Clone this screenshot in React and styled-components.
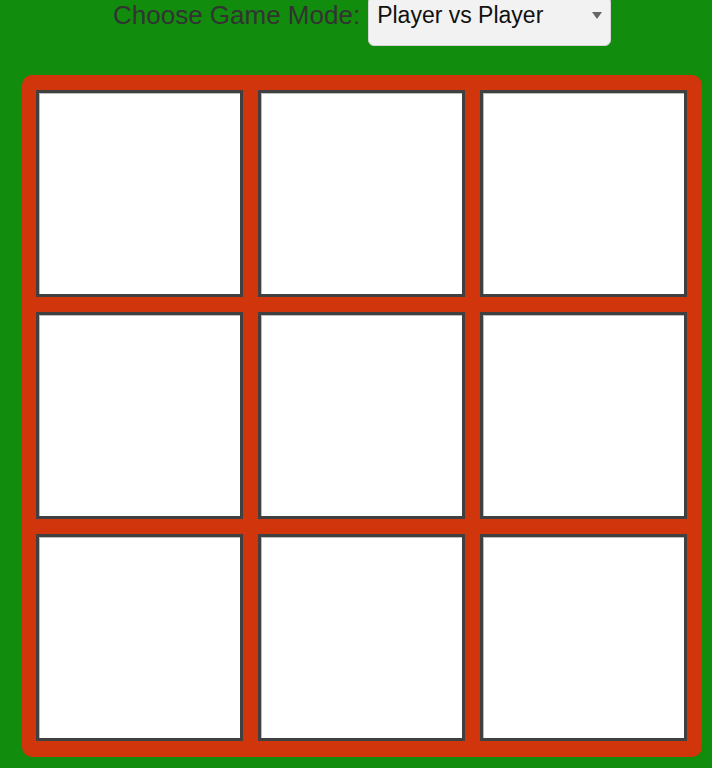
import React, { useState } from "react";
import styled, { createGlobalStyle } from "styled-components";

const GlobalStyle = createGlobalStyle`
  html, body {
    margin: 0;
    padding: 0;
    background: #118c0c;
    overflow: hidden;
  }
  body {
    font-family: "Liberation Sans", Arial, sans-serif;
  }
`;

const Page = styled.div`
  width: 712px;
  height: 768px;
  background: #118c0c;
  display: flex;
  flex-direction: column;
`;

const ModeBar = styled.div`
  display: flex;
  align-items: center;
  gap: 8px;
  margin-top: -4px;
  padding-left: 113px;
  height: 50px;
`;

const ModeLabel = styled.label`
  font-size: 26px;
  color: #333333;
  line-height: 1;
  margin-top: -12px;
`;

const SelectWrap = styled.div`
  position: relative;
  width: 243px;
  height: 50px;
`;

const ModeSelect = styled.select`
  appearance: none;
  width: 100%;
  height: 100%;
  box-sizing: border-box;
  padding: 0 30px 12px 8px;
  font-family: "Liberation Sans", Arial, sans-serif;
  font-size: 23px;
  color: #111;
  background: #f2f2f2;
  border: 1px solid #d4d4d4;
  border-radius: 6px;
  outline: none;
`;

const Caret = styled.span`
  position: absolute;
  right: 9px;
  top: 16px;
  width: 0;
  height: 0;
  border-left: 5px solid transparent;
  border-right: 5px solid transparent;
  border-top: 7px solid #666;
  pointer-events: none;
`;

const Board = styled.div`
  margin: 29px 0 0 22px;
  width: 680px;
  box-sizing: border-box;
  padding: 15px 15px 16px 14px;
  display: grid;
  grid-template-columns: repeat(3, 207px);
  grid-template-rows: repeat(3, 207px);
  gap: 15px;
  background: #d0350c;
  border-radius: 10px;
`;

const Cell = styled.button`
  box-sizing: border-box;
  background: #ffffff;
  border: 3px solid #404040;
  box-shadow: inset 1px 1px 0 #bdbdbd;
  padding: 0;
  margin: 0;
  font-family: "Liberation Sans", Arial, sans-serif;
  font-size: 96px;
  color: #333;
  cursor: pointer;
`;

export default function App() {
  const [mode, setMode] = useState("pvp");
  const [cells, setCells] = useState(Array(9).fill(""));
  const [turn, setTurn] = useState("X");

  const play = (i) => {
    if (cells[i]) return;
    const next = cells.slice();
    next[i] = turn;
    setCells(next);
    setTurn(turn === "X" ? "O" : "X");
  };

  return (
    <Page>
      <GlobalStyle />
      <ModeBar>
        <ModeLabel htmlFor="mode">Choose Game Mode:</ModeLabel>
        <SelectWrap>
          <ModeSelect id="mode" value={mode} onChange={(e) => setMode(e.target.value)}>
            <option value="pvp">Player vs Player</option>
            <option value="pvc">Player vs Computer</option>
          </ModeSelect>
          <Caret />
        </SelectWrap>
      </ModeBar>
      <Board>
        {cells.map((v, i) => (
          <Cell key={i} onClick={() => play(i)}>
            {v}
          </Cell>
        ))}
      </Board>
    </Page>
  );
}
